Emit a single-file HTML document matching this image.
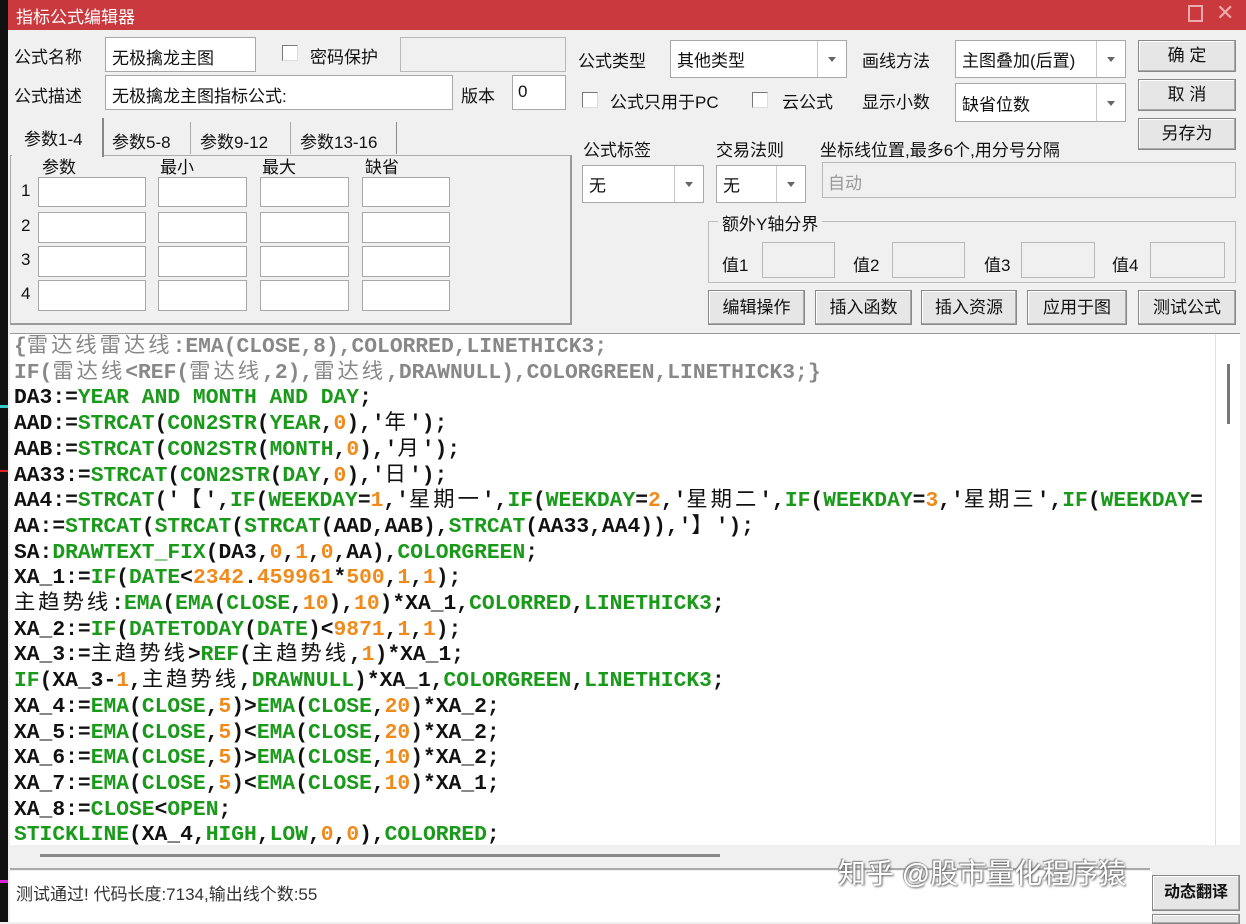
<!DOCTYPE html>
<html><head><meta charset="utf-8"><style>
*{margin:0;padding:0;box-sizing:border-box}
body{width:1246px;height:922px;overflow:hidden;background:#f0f0f0;position:relative;font-family:"Liberation Sans","Noto Sans CJK SC",sans-serif;font-size:17px;color:#111}
.a{position:absolute;white-space:nowrap}
.in{position:absolute;background:#fff;border:1px solid #a8a8a8}
.dis{position:absolute;background:#f0f0f0;border:1px solid #b8b8b8}
.sel{position:absolute;background:#fff;border:1px solid #a8a8a8}
.sel .ar{position:absolute;right:0;top:0;bottom:0;width:29px;border-left:1px solid #c8c8c8}
.sel .ar:after{content:"";position:absolute;left:10px;top:50%;margin-top:-2px;border-left:4px solid transparent;border-right:4px solid transparent;border-top:5px solid #666}
.sel span{position:absolute;left:6px;top:50%;transform:translateY(-50%)}
.btn{position:absolute;background:#e6e6e6;border:1px solid #888;box-shadow:inset -1px -1px 0 #aaa,inset 1px 1px 0 #fff;text-align:center;font-size:17px}
.cb{position:absolute;width:16px;height:16px;border:1px solid #777;background:#fff;border-right-color:#ddd;border-bottom-color:#ddd}
#code{position:absolute;left:10px;top:333px;width:1230px;height:512px;background:#fff;overflow:hidden;border-top:1px solid #999}
.ln{position:absolute;left:4px;font-family:"Liberation Mono","Noto Sans CJK SC",monospace;font-weight:bold;font-size:21.3px;line-height:26px;white-space:pre;color:#111}
.g{color:#1a9a1a}.o{color:#f08a1a}.gr{color:#888}
.c{letter-spacing:3px;font-weight:normal}
</style></head><body>
<div class="a" style="left:0;top:0;width:8px;height:922px;background:#111"></div>
<div class="a" style="left:0;top:405px;width:8px;height:3px;background:#3cc"></div>
<div class="a" style="left:0;top:470px;width:8px;height:2px;background:#d22"></div>
<div class="a" style="left:0;top:880px;width:8px;height:3px;background:#d2d"></div>
<div class="a" style="left:8px;top:0;width:1238px;height:30px;background:#c9393e"></div>
<div class="a" style="left:16px;top:3px;color:#fff;font-size:17px">指标公式编辑器</div>
<div class="a" style="left:1188px;top:5px;width:15px;height:17px;border:2px solid #eaa"></div>
<div class="a" style="left:1216px;top:0px;color:#eaa;font-size:22px">✕</div>

<div class="a" style="left:14px;top:43px">公式名称</div>
<div class="in" style="left:105px;top:37px;width:151px;height:35px"><span class="a" style="left:6px;top:6px">无极擒龙主图</span></div>
<div class="cb" style="left:282px;top:45px"></div>
<div class="a" style="left:310px;top:43px">密码保护</div>
<div class="dis" style="left:400px;top:37px;width:166px;height:35px"></div>
<div class="a" style="left:14px;top:82px">公式描述</div>
<div class="in" style="left:105px;top:75px;width:348px;height:35px"><span class="a" style="left:6px;top:6px">无极擒龙主图指标公式:</span></div>
<div class="a" style="left:461px;top:82px">版本</div>
<div class="in" style="left:512px;top:75px;width:54px;height:35px"><span class="a" style="left:5px;top:6px">0</span></div>

<div class="a" style="left:578px;top:47px">公式类型</div>
<div class="sel" style="left:670px;top:40px;width:177px;height:38px"><span>其他类型</span><div class="ar"></div></div>
<div class="a" style="left:862px;top:47px">画线方法</div>
<div class="sel" style="left:955px;top:40px;width:171px;height:38px"><span>主图叠加(后置)</span><div class="ar"></div></div>
<div class="btn" style="left:1138px;top:40px;width:98px;height:32px;line-height:30px">确 定</div>
<div class="cb" style="left:582px;top:92px"></div>
<div class="a" style="left:610px;top:88px">公式只用于PC</div>
<div class="cb" style="left:752px;top:92px"></div>
<div class="a" style="left:782px;top:88px">云公式</div>
<div class="a" style="left:862px;top:88px">显示小数</div>
<div class="sel" style="left:955px;top:83px;width:171px;height:39px"><span>缺省位数</span><div class="ar"></div></div>
<div class="btn" style="left:1138px;top:79px;width:98px;height:32px;line-height:30px">取 消</div>
<div class="btn" style="left:1138px;top:118px;width:98px;height:32px;line-height:30px">另存为</div>

<div class="a" style="left:10px;top:155px;width:562px;height:170px;border:1px solid #aaa;border-right:2px solid #999;border-bottom:2px solid #999"></div>
<div class="a" style="left:12px;top:118px;width:92px;height:39px;background:#f0f0f0;border-right:2px solid #888"></div>
<div class="a" style="left:24px;top:125px">参数1-4</div>
<div class="a" style="left:112px;top:128px">参数5-8</div>
<div class="a" style="left:190px;top:122px;height:32px;border-left:1px solid #aaa"></div>
<div class="a" style="left:200px;top:128px">参数9-12</div>
<div class="a" style="left:290px;top:122px;height:32px;border-left:1px solid #aaa"></div>
<div class="a" style="left:300px;top:128px">参数13-16</div>
<div class="a" style="left:396px;top:122px;height:32px;border-left:1px solid #888"></div>
<div class="a" style="left:42px;top:153px">参数</div>
<div class="a" style="left:160px;top:153px">最小</div>
<div class="a" style="left:262px;top:153px">最大</div>
<div class="a" style="left:365px;top:153px">缺省</div>
<div class="a" style="left:21px;top:181px">1</div><div class="a" style="left:21px;top:216px">2</div><div class="a" style="left:21px;top:250px">3</div><div class="a" style="left:21px;top:284px">4</div>
<div class="in" style="left:38px;top:177px;width:108px;height:30px"></div><div class="in" style="left:158px;top:177px;width:89px;height:30px"></div><div class="in" style="left:260px;top:177px;width:89px;height:30px"></div><div class="in" style="left:362px;top:177px;width:88px;height:30px"></div>
<div class="in" style="left:38px;top:212px;width:108px;height:31px"></div><div class="in" style="left:158px;top:212px;width:89px;height:31px"></div><div class="in" style="left:260px;top:212px;width:89px;height:31px"></div><div class="in" style="left:362px;top:212px;width:88px;height:31px"></div>
<div class="in" style="left:38px;top:246px;width:108px;height:31px"></div><div class="in" style="left:158px;top:246px;width:89px;height:31px"></div><div class="in" style="left:260px;top:246px;width:89px;height:31px"></div><div class="in" style="left:362px;top:246px;width:88px;height:31px"></div>
<div class="in" style="left:38px;top:280px;width:108px;height:31px"></div><div class="in" style="left:158px;top:280px;width:89px;height:31px"></div><div class="in" style="left:260px;top:280px;width:89px;height:31px"></div><div class="in" style="left:362px;top:280px;width:88px;height:31px"></div>

<div class="a" style="left:583px;top:136px">公式标签</div>
<div class="sel" style="left:582px;top:165px;width:122px;height:38px"><span>无</span><div class="ar"></div></div>
<div class="a" style="left:716px;top:136px">交易法则</div>
<div class="sel" style="left:716px;top:165px;width:90px;height:38px"><span>无</span><div class="ar"></div></div>
<div class="a" style="left:820px;top:136px">坐标线位置,最多6个,用分号分隔</div>
<div class="dis" style="left:822px;top:162px;width:414px;height:36px"><span class="a" style="left:5px;top:6px;color:#999">自动</span></div>
<div class="a" style="left:708px;top:221px;width:528px;height:62px;border:1px solid #bbb"></div>
<div class="a" style="left:718px;top:210px;background:#f0f0f0;padding:0 4px">额外Y轴分界</div>
<div class="a" style="left:722px;top:251px">值1</div><div class="dis" style="left:762px;top:242px;width:73px;height:36px"></div>
<div class="a" style="left:853px;top:251px">值2</div><div class="dis" style="left:892px;top:242px;width:73px;height:36px"></div>
<div class="a" style="left:984px;top:251px">值3</div><div class="dis" style="left:1021px;top:242px;width:74px;height:36px"></div>
<div class="a" style="left:1112px;top:251px">值4</div><div class="dis" style="left:1150px;top:242px;width:75px;height:36px"></div>
<div class="btn" style="left:708px;top:290px;width:97px;height:35px;line-height:33px">编辑操作</div>
<div class="btn" style="left:815px;top:290px;width:97px;height:35px;line-height:33px">插入函数</div>
<div class="btn" style="left:921px;top:290px;width:96px;height:35px;line-height:33px">插入资源</div>
<div class="btn" style="left:1027px;top:290px;width:100px;height:35px;line-height:33px">应用于图</div>
<div class="btn" style="left:1138px;top:290px;width:98px;height:35px;line-height:33px">测试公式</div>

<div id="code">
<div class="ln gr" style="top:0">{<span class="c">雷达线雷达线</span>:EMA(CLOSE,8),COLORRED,LINETHICK3;</div>
<div class="ln gr" style="top:26px">IF(<span class="c">雷达线</span>&lt;REF(<span class="c">雷达线</span>,2),<span class="c">雷达线</span>,DRAWNULL),COLORGREEN,LINETHICK3;}</div>
<div class="ln" style="top:51px">DA3:=<span class="g">YEAR AND MONTH AND DAY</span>;</div>
<div class="ln" style="top:77px">AAD:=<span class="g">STRCAT</span>(<span class="g">CON2STR</span>(<span class="g">YEAR</span>,<span class="o">0</span>),'<span class="c">年</span>');</div>
<div class="ln" style="top:103px">AAB:=<span class="g">STRCAT</span>(<span class="g">CON2STR</span>(<span class="g">MONTH</span>,<span class="o">0</span>),'<span class="c">月</span>');</div>
<div class="ln" style="top:129px">AA33:=<span class="g">STRCAT</span>(<span class="g">CON2STR</span>(<span class="g">DAY</span>,<span class="o">0</span>),'<span class="c">日</span>');</div>
<div class="ln" style="top:154px">AA4:=<span class="g">STRCAT</span>('<span class="c">【</span>',<span class="g">IF</span>(<span class="g">WEEKDAY</span>=<span class="o">1</span>,'<span class="c">星期一</span>',<span class="g">IF</span>(<span class="g">WEEKDAY</span>=<span class="o">2</span>,'<span class="c">星期二</span>',<span class="g">IF</span>(<span class="g">WEEKDAY</span>=<span class="o">3</span>,'<span class="c">星期三</span>',<span class="g">IF</span>(<span class="g">WEEKDAY</span>=</div>
<div class="ln" style="top:180px">AA:=<span class="g">STRCAT</span>(<span class="g">STRCAT</span>(<span class="g">STRCAT</span>(AAD,AAB),<span class="g">STRCAT</span>(AA33,AA4)),'<span class="c">】</span>');</div>
<div class="ln" style="top:206px">SA:<span class="g">DRAWTEXT_FIX</span>(DA3,<span class="o">0</span>,<span class="o">1</span>,<span class="o">0</span>,AA),<span class="g">COLORGREEN</span>;</div>
<div class="ln" style="top:231px">XA_1:=<span class="g">IF</span>(<span class="g">DATE</span>&lt;<span class="o">2342</span>.<span class="o">459961</span>*<span class="o">500</span>,<span class="o">1</span>,<span class="o">1</span>);</div>
<div class="ln" style="top:257px"><span class="c">主趋势线</span>:<span class="g">EMA</span>(<span class="g">EMA</span>(<span class="g">CLOSE</span>,<span class="o">10</span>),<span class="o">10</span>)*XA_1,<span class="g">COLORRED</span>,<span class="g">LINETHICK3</span>;</div>
<div class="ln" style="top:283px">XA_2:=<span class="g">IF</span>(<span class="g">DATETODAY</span>(<span class="g">DATE</span>)&lt;<span class="o">9871</span>,<span class="o">1</span>,<span class="o">1</span>);</div>
<div class="ln" style="top:308px">XA_3:=<span class="c">主趋势线</span>&gt;<span class="g">REF</span>(<span class="c">主趋势线</span>,<span class="o">1</span>)*XA_1;</div>
<div class="ln" style="top:334px"><span class="g">IF</span>(XA_3-<span class="o">1</span>,<span class="c">主趋势线</span>,<span class="g">DRAWNULL</span>)*XA_1,<span class="g">COLORGREEN</span>,<span class="g">LINETHICK3</span>;</div>
<div class="ln" style="top:360px">XA_4:=<span class="g">EMA</span>(<span class="g">CLOSE</span>,<span class="o">5</span>)&gt;<span class="g">EMA</span>(<span class="g">CLOSE</span>,<span class="o">20</span>)*XA_2;</div>
<div class="ln" style="top:386px">XA_5:=<span class="g">EMA</span>(<span class="g">CLOSE</span>,<span class="o">5</span>)&lt;<span class="g">EMA</span>(<span class="g">CLOSE</span>,<span class="o">20</span>)*XA_2;</div>
<div class="ln" style="top:411px">XA_6:=<span class="g">EMA</span>(<span class="g">CLOSE</span>,<span class="o">5</span>)&gt;<span class="g">EMA</span>(<span class="g">CLOSE</span>,<span class="o">10</span>)*XA_2;</div>
<div class="ln" style="top:437px">XA_7:=<span class="g">EMA</span>(<span class="g">CLOSE</span>,<span class="o">5</span>)&lt;<span class="g">EMA</span>(<span class="g">CLOSE</span>,<span class="o">10</span>)*XA_1;</div>
<div class="ln" style="top:463px">XA_8:=<span class="g">CLOSE</span>&lt;<span class="g">OPEN</span>;</div>
<div class="ln" style="top:488px"><span class="g">STICKLINE</span>(XA_4,<span class="g">HIGH</span>,<span class="g">LOW</span>,<span class="o">0</span>,<span class="o">0</span>),<span class="g">COLORRED</span>;</div>
<div class="a" style="left:1205px;top:0;width:25px;height:512px;background:#fff;border-left:1px solid #e0e0e0"></div>
<div class="a" style="left:1217px;top:30px;width:3px;height:60px;background:#777"></div>
</div>
<div class="a" style="left:10px;top:845px;width:1205px;height:22px;background:#f0f0f0"></div>
<div class="a" style="left:40px;top:854px;width:680px;height:3px;background:#888"></div>
<div class="a" style="left:10px;top:868px;width:1140px;height:2px;background:#aaa"></div>
<div class="a" style="left:10px;top:871px;width:1142px;height:51px;background:#fff"></div>
<div class="a" style="left:16px;top:880px;font-size:17px;color:#333">测试通过! 代码长度:7134,输出线个数:55</div>
<div class="btn" style="left:1152px;top:875px;width:88px;height:36px;line-height:34px;font-size:16px;font-weight:bold">动态翻译</div>
<div class="btn" style="left:1152px;top:914px;width:88px;height:10px"></div>
<div class="a" style="left:838px;top:852px;font-size:28px;color:#fff;text-shadow:1px 1px 2px #555,-1px -1px 1px #888">知乎 @股市量化程序猿</div>
</body></html>
